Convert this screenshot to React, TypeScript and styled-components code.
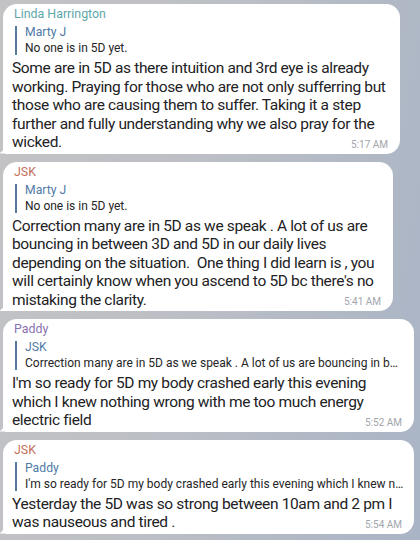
import React from "react";
import styled, { createGlobalStyle } from "styled-components";

const Global = createGlobalStyle`
  html, body { margin: 0; padding: 0; }
  body {
    width: 420px;
    height: 540px;
    overflow: hidden;
    font-family: Roboto, "Noto Sans", "Liberation Sans", sans-serif;
    background: linear-gradient(100deg, #c3c3c5 0%, #bcbfc5 45%, #a9b4c6 100%);
  }
`;

const Feed = styled.div`
  display: flex;
  flex-direction: column;
  gap: 8px;
  padding: 4px 0 0 3px;
  height: 540px;
  box-sizing: border-box;
`;

const Bubble = styled.div<{ $w: number }>`
  position: relative;
  width: ${(p) => p.$w}px;
  box-sizing: border-box;
  background: #ffffff;
  border-radius: 14px 14px 14px 4px;
  padding: 2px 10px 2px 9px;
  &::before {
    content: "";
    position: absolute;
    left: -4px;
    bottom: 0;
    width: 8px;
    height: 10px;
    background: #ffffff;
    clip-path: path("M8 0 L8 10 L0 10 C4 8 6 4 8 0 Z");
  }
`;

const Name = styled.div<{ $c: string }>`
  color: ${(p) => p.$c};
  font-size: 12.4px;
  line-height: 16px;
  margin-left: 2px;
`;

const Reply = styled.div`
  margin: 4px 0 4px 3px;
  border-left: 2px solid #56799f;
  padding-left: 8px;
  display: flex;
  flex-direction: column;
  gap: 3px;
  min-width: 0;
`;

const ReplyName = styled.div`
  color: #4f7aa5;
  font-size: 12.2px;
  line-height: 13px;
`;

const ReplyText = styled.div`
  color: #252525;
  font-size: 12px;
  line-height: 13px;
  white-space: nowrap;
  overflow: hidden;
  text-overflow: ellipsis;
`;

const Body = styled.div`
  color: #222224;
  font-size: 15.5px;
  letter-spacing: -0.35px;
  line-height: 18.5px;
  white-space: pre;
`;

const LastRow = styled.div`
  display: flex;
  justify-content: space-between;
  align-items: flex-end;
`;

const Time = styled.span`
  color: #a2a6ac;
  font-size: 10px;
  letter-spacing: 0;
  line-height: 12px;
  margin-bottom: 1px;
  margin-right: 2px;
`;

type Msg = {
  name: string;
  color: string;
  replyName: string;
  replyText: string;
  lines: string[];
  time: string;
  width: number;
};

const messages: Msg[] = [
  {
    name: "Linda Harrington",
    color: "#5ea8aa",
    replyName: "Marty J",
    replyText: "No one is in 5D yet.",
    lines: [
      "Some are in 5D as there intuition and 3rd eye is already",
      "working. Praying for those who are not only sufferring but",
      "those who are causing them to suffer. Taking it a step",
      "further and fully understanding why we also pray for the",
      "wicked.",
    ],
    time: "5:17 AM",
    width: 397,
  },
  {
    name: "JSK",
    color: "#c4705c",
    replyName: "Marty J",
    replyText: "No one is in 5D yet.",
    lines: [
      "Correction many are in 5D as we speak . A lot of us are",
      "bouncing in between 3D and 5D in our daily lives",
      "depending on the situation.  One thing I did learn is , you",
      "will certainly know when you ascend to 5D bc there's no",
      "mistaking the clarity.",
    ],
    time: "5:41 AM",
    width: 390,
  },
  {
    name: "Paddy",
    color: "#8a72b0",
    replyName: "JSK",
    replyText:
      "Correction many are in 5D as we speak . A lot of us are bouncing in between 3D and 5D",
    lines: [
      "I'm so ready for 5D my body crashed early this evening",
      "which I knew nothing wrong with me too much energy",
      "electric field",
    ],
    time: "5:52 AM",
    width: 411,
  },
  {
    name: "JSK",
    color: "#c4705c",
    replyName: "Paddy",
    replyText:
      "I'm so ready for 5D my body crashed early this evening which I knew nothing wrong",
    lines: [
      "Yesterday the 5D was so strong between 10am and 2 pm I",
      "was nauseous and tired .",
    ],
    time: "5:54 AM",
    width: 411,
  },
];

export default function App() {
  return (
    <>
      <Global />
      <Feed>
        {messages.map((m, i) => (
          <Bubble key={i} $w={m.width}>
            <Name $c={m.color}>{m.name}</Name>
            <Reply>
              <ReplyName>{m.replyName}</ReplyName>
              <ReplyText>{m.replyText}</ReplyText>
            </Reply>
            <Body>
              {m.lines.slice(0, -1).join("\n")}
              <LastRow>
                <span>{m.lines[m.lines.length - 1]}</span>
                <Time>{m.time}</Time>
              </LastRow>
            </Body>
          </Bubble>
        ))}
      </Feed>
    </>
  );
}
